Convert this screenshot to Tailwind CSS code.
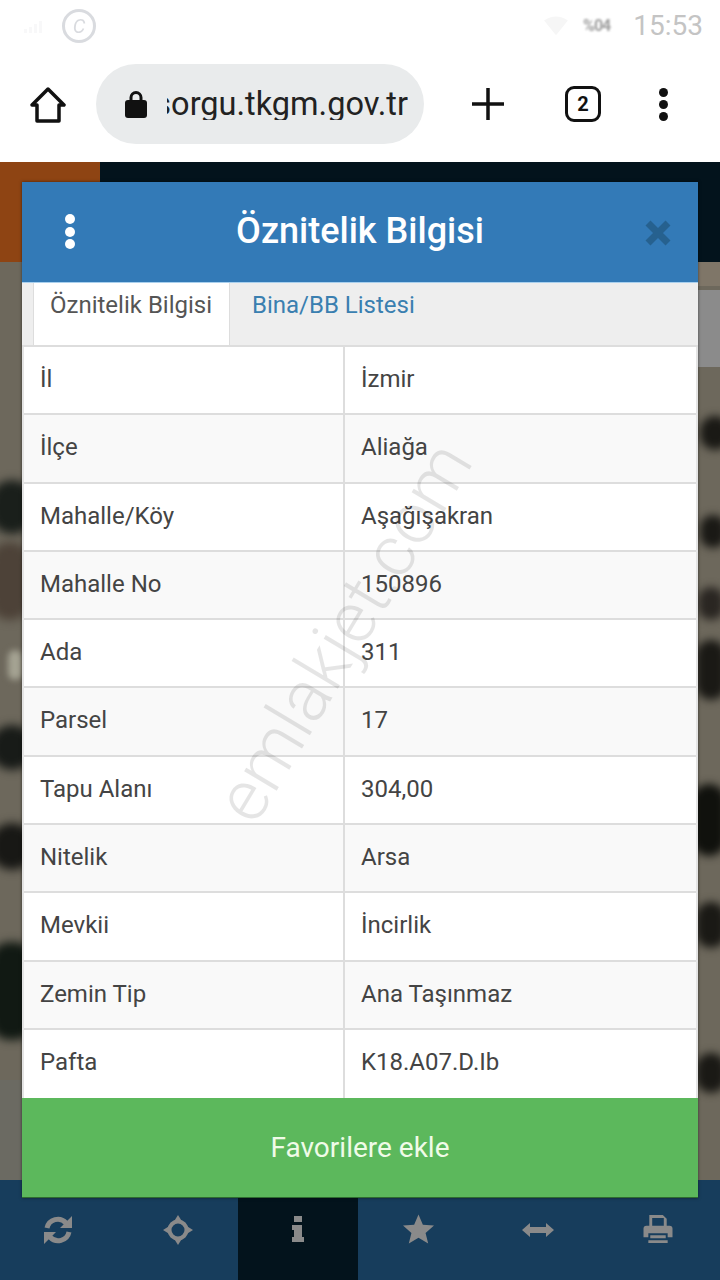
<!DOCTYPE html>
<html lang="en">
<head>
    <meta charset="UTF-8">
    <meta name="viewport" content="width=device-width, initial-scale=1.0">
    <title>Öznitelik Bilgisi</title>
    <script src="https://cdn.jsdelivr.net/npm/@tailwindcss/browser@4"></script>
</head>
<body class="w-[720px] h-[1280px] overflow-hidden bg-white font-['Roboto',sans-serif]">
    <!-- Status bar -->
    <div class="h-[50px] flex items-center justify-between pl-[24px] pr-[17px] pt-[1px]">
        <div class="flex items-center gap-[4px] opacity-25">
            <div class="w-[34px] h-[14px] flex items-end gap-[2px]">
                <span class="w-[3px] h-[4px] bg-gray-200"></span>
                <span class="w-[3px] h-[6px] bg-gray-200"></span>
                <span class="w-[3px] h-[9px] bg-gray-200"></span>
                <span class="w-[3px] h-[12px] bg-gray-200"></span>
            </div>
            <div class="w-[34px] h-[34px] rounded-full border-[3px] border-gray-500 flex items-center justify-center text-[20px] italic text-gray-500">C</div>
        </div>
        <div class="flex items-center">
            <svg class="w-[28px] h-[22px] mr-[13px]" viewBox="0 0 30 24"><path d="M2 6 Q15 -3 28 6 L15 22 Z" fill="#f6f6f6"/></svg>
            <span class="text-[16px] font-bold text-[#a0a0a0] tracking-[-1px] mr-[23px] blur-[1px]">%04</span>
            <span class="text-[28px] leading-none text-[#c4c4c4]">15:53</span>
        </div>
    </div>

    <!-- Browser toolbar -->
    <div class="h-[112px] relative">
        <svg class="absolute left-[30px] top-[37px] w-[36px] h-[36px]" viewBox="0 0 36 36" fill="none" stroke="#111" stroke-width="3.5" stroke-linejoin="round"><path d="M18 2 L34 18 H29 V34 H7 V18 H2 Z"/></svg>
        <div class="absolute left-[96px] top-[14px] w-[328px] h-[80px] rounded-[40px] bg-[#e9ebec] flex items-center pl-[29px] overflow-hidden">
            <svg class="w-[22px] h-[28px] shrink-0" viewBox="0 0 22 28"><path d="M6 12 V7.5 a5 5 0 0 1 10 0 V12" fill="none" stroke="#111" stroke-width="3"/><rect x="0" y="10" width="22" height="18" rx="3" fill="#111"/></svg>
            <div class="ml-[20px] w-[241px] overflow-hidden whitespace-nowrap flex justify-end text-[32.5px] leading-none text-[#222]">sorgu.tkgm.gov.tr</div>
        </div>
        <svg class="absolute left-[472px] top-[38px] w-[32px] h-[32px]" viewBox="0 0 32 32" stroke="#111" stroke-width="3.5"><path d="M0 16 H32 M16 0 V32"/></svg>
        <div class="absolute left-[565px] top-[36px] w-[36px] h-[36px] rounded-[9px] border-[3.5px] border-[#111] flex items-center justify-center text-[20px] font-bold text-[#111]">2</div>
        <div class="absolute left-[659px] top-[38px] flex flex-col gap-[3px]">
            <span class="w-[9px] h-[9px] rounded-full bg-[#111]"></span>
            <span class="w-[9px] h-[9px] rounded-full bg-[#111]"></span>
            <span class="w-[9px] h-[9px] rounded-full bg-[#111]"></span>
        </div>
    </div>

    <!-- Map page -->
    <div class="relative h-[1118px] bg-[#6d685c] overflow-hidden">
        <!-- top bar over the map -->
        <div class="h-[100px] flex bg-[#03131c]">
            <div class="w-[100px] bg-[#8e4413]"></div>
        </div>
        <!-- satellite blotches, left edge -->
        <div class="absolute left-[-10px] top-[318px] w-[44px] h-[54px] rounded-full bg-[#1a1f1b] blur-[5px]"></div>
        <div class="absolute left-[-10px] top-[380px] w-[40px] h-[78px] rounded-[20px] bg-[#4d4238] blur-[5px]"></div>
        <div class="absolute left-[8px] top-[488px] w-[14px] h-[30px] rounded-full bg-[#a5a393] blur-[3px]"></div>
        <div class="absolute left-[-10px] top-[563px] w-[44px] h-[45px] rounded-full bg-[#181b18] blur-[5px]"></div>
        <div class="absolute left-[-10px] top-[661px] w-[44px] h-[47px] rounded-full bg-[#181815] blur-[5px]"></div>
        <div class="absolute left-[-10px] top-[780px] w-[44px] h-[98px] rounded-[20px] bg-[#111913] blur-[5px]"></div>
        <div class="absolute left-0 top-[918px] w-[24px] h-[100px] bg-[#6b6a62]"></div>
        <!-- satellite blotches, right edge -->
        <div class="absolute right-0 top-[100px] w-[22px] h-[24px] bg-[#7f7668]"></div>
        <div class="absolute right-0 top-[128px] w-[22px] h-[77px] bg-[#8b8b8b]"></div>
        <div class="absolute right-[-10px] top-[254px] w-[30px] h-[34px] rounded-full bg-[#1a1915] blur-[4px]"></div>
        <div class="absolute right-[-6px] top-[353px] w-[26px] h-[33px] rounded-full bg-[#1a1915] blur-[4px]"></div>
        <div class="absolute right-[-4px] top-[425px] w-[26px] h-[33px] rounded-full bg-[#2a2622] blur-[4px]"></div>
        <div class="absolute right-[-6px] top-[478px] w-[30px] h-[60px] rounded-full bg-[#1a1915] blur-[4px]"></div>
        <div class="absolute right-[-6px] top-[622px] w-[34px] h-[72px] rounded-[20px] bg-[#10110d] blur-[4px]"></div>
        <div class="absolute right-[-6px] top-[740px] w-[30px] h-[46px] rounded-full bg-[#1a1915] blur-[4px]"></div>
        <div class="absolute right-[-6px] top-[891px] w-[30px] h-[40px] rounded-full bg-[#1a1915] blur-[4px]"></div>

        <!-- bottom nav -->
        <div class="absolute left-0 right-0 bottom-0 h-[100px] bg-[#173d5c]">
            <div class="ml-[-2px] w-[720px] h-full grid grid-cols-6">
                <div class="flex justify-center pt-[35px]">
                    <svg class="w-[28px] h-[30px]" viewBox="0 0 28 30" fill="none" stroke="#8a8a8a" stroke-width="5"><path d="M3 13 a11 11 0 0 1 19 -5 M25 17 a11 11 0 0 1 -19 5"/><path d="M28 1 V13 H16 Z M0 29 V17 H12 Z" fill="#8a8a8a" stroke="none"/></svg>
                </div>
                <div class="flex justify-center pt-[35px]">
                    <svg class="w-[30px] h-[30px]" viewBox="0 0 30 30" fill="none" stroke="#8a8a8a" stroke-width="4"><circle cx="15" cy="15" r="8.5"/><path d="M15 0 L10 8 H20 Z M15 30 L10 22 H20 Z M0 15 L8 10 V20 Z M30 15 L22 10 V20 Z" fill="#8a8a8a" stroke="none"/></svg>
                </div>
                <div class="flex justify-center pt-[36px] bg-[#03131c]">
                    <svg class="w-[14px] h-[26px]" viewBox="0 0 14 26" fill="#8a8a8a"><rect x="3" y="0" width="8" height="6"/><path d="M1 9 H11 V21 H13 V26 H1 V21 H3 V14 H1 Z"/></svg>
                </div>
                <div class="flex justify-center pt-[34px]">
                    <svg class="w-[31px] h-[30px]" viewBox="0 0 32 30" fill="#8a8a8a"><path d="M16 0 L20.5 10.5 L32 11.5 L23.3 19 L26 30 L16 24 L6 30 L8.7 19 L0 11.5 L11.5 10.5 Z"/></svg>
                </div>
                <div class="flex justify-center pt-[43px]">
                    <svg class="w-[32px] h-[14px]" viewBox="0 0 32 14" fill="#8a8a8a"><path d="M0 7 L8 0 V4 H24 V0 L32 7 L24 14 V10 H8 V14 Z"/></svg>
                </div>
                <div class="flex justify-center pt-[35px]">
                    <svg class="w-[30px] h-[29px]" viewBox="0 0 30 30" fill="#8a8a8a"><path d="M6 0 H20 L24 4 V12 H21 V3 H9 V12 H6 Z"/><path d="M3 11 H27 Q30 11 30 14 V23 H25 V19 H5 V23 H0 V14 Q0 11 3 11 Z"/><path d="M7 21 H23 V24 H7 Z M5 26 H25 V29 H5 Z"/></svg>
                </div>
            </div>
        </div>

        <!-- dialog -->
        <div class="absolute left-[22px] top-[20px] w-[676px] border-b-[1px] border-[#2f6b2f] shadow-[0_0_3px_rgba(0,0,0,0.5)]">
            <div class="relative h-[100px] bg-[#337ab7] flex items-center justify-center">
                <div class="absolute left-[43px] top-[32px] flex flex-col gap-[2.5px]">
                    <span class="w-[10px] h-[10px] rounded-full bg-white"></span>
                    <span class="w-[10px] h-[10px] rounded-full bg-white"></span>
                    <span class="w-[10px] h-[10px] rounded-full bg-white"></span>
                </div>
                <span class="text-[36px] font-medium text-white pb-[2px]">Öznitelik Bilgisi</span>
                <svg class="absolute left-[623px] top-[38px] w-[26px] h-[26px]" viewBox="0 0 26 26" stroke="#26618f" stroke-width="7"><path d="M3 3 L23 23 M23 3 L3 23"/></svg>
            </div>
            <div class="h-[65px] bg-[#eeeeee] border-t-[1px] border-b-[2px] border-t-[#a9d0ee] border-b-[#dddddd] flex pl-[11px] text-[24px]">
                <div class="w-[197px] h-[62px] bg-white border-x-[1px] border-[#dddddd] pl-[16px] pt-[4px] text-[#555555]">Öznitelik Bilgisi</div>
                <div class="pl-[22px] pt-[4px] text-[#3a7fb0]">Bina/BB Listesi</div>
            </div>
            <div class="bg-white border-x-[2px] border-[#e4e4e4] text-[24px] text-[#444444]">
                <div class="h-[68.3px] grid grid-cols-[321px_1fr] bg-white border-b-[2px] border-[#dddddd]"><div class="pl-[16px] pt-[14px] border-r-[2px] border-[#dddddd]">İl</div><div class="pl-[16px] pt-[14px]">İzmir</div></div>
                <div class="h-[68.3px] grid grid-cols-[321px_1fr] bg-[#f9f9f9] border-b-[2px] border-[#dddddd]"><div class="pl-[16px] pt-[14px] border-r-[2px] border-[#dddddd]">İlçe</div><div class="pl-[16px] pt-[14px]">Aliağa</div></div>
                <div class="h-[68.3px] grid grid-cols-[321px_1fr] bg-white border-b-[2px] border-[#dddddd]"><div class="pl-[16px] pt-[14px] border-r-[2px] border-[#dddddd]">Mahalle/Köy</div><div class="pl-[16px] pt-[14px]">Aşağışakran</div></div>
                <div class="h-[68.3px] grid grid-cols-[321px_1fr] bg-[#f9f9f9] border-b-[2px] border-[#dddddd]"><div class="pl-[16px] pt-[14px] border-r-[2px] border-[#dddddd]">Mahalle No</div><div class="pl-[16px] pt-[14px]">150896</div></div>
                <div class="h-[68.3px] grid grid-cols-[321px_1fr] bg-white border-b-[2px] border-[#dddddd]"><div class="pl-[16px] pt-[14px] border-r-[2px] border-[#dddddd]">Ada</div><div class="pl-[16px] pt-[14px]">311</div></div>
                <div class="h-[68.3px] grid grid-cols-[321px_1fr] bg-[#f9f9f9] border-b-[2px] border-[#dddddd]"><div class="pl-[16px] pt-[14px] border-r-[2px] border-[#dddddd]">Parsel</div><div class="pl-[16px] pt-[14px]">17</div></div>
                <div class="h-[68.3px] grid grid-cols-[321px_1fr] bg-white border-b-[2px] border-[#dddddd]"><div class="pl-[16px] pt-[14px] border-r-[2px] border-[#dddddd]">Tapu Alanı</div><div class="pl-[16px] pt-[14px]">304,00</div></div>
                <div class="h-[68.3px] grid grid-cols-[321px_1fr] bg-[#f9f9f9] border-b-[2px] border-[#dddddd]"><div class="pl-[16px] pt-[14px] border-r-[2px] border-[#dddddd]">Nitelik</div><div class="pl-[16px] pt-[14px]">Arsa</div></div>
                <div class="h-[68.3px] grid grid-cols-[321px_1fr] bg-white border-b-[2px] border-[#dddddd]"><div class="pl-[16px] pt-[14px] border-r-[2px] border-[#dddddd]">Mevkii</div><div class="pl-[16px] pt-[14px]">İncirlik</div></div>
                <div class="h-[68.3px] grid grid-cols-[321px_1fr] bg-[#f9f9f9] border-b-[2px] border-[#dddddd]"><div class="pl-[16px] pt-[14px] border-r-[2px] border-[#dddddd]">Zemin Tip</div><div class="pl-[16px] pt-[14px]">Ana Taşınmaz</div></div>
                <div class="h-[68.3px] grid grid-cols-[321px_1fr] bg-white"><div class="pl-[16px] pt-[14px] border-r-[2px] border-[#dddddd]">Pafta</div><div class="pl-[16px] pt-[14px]">K18.A07.D.Ib</div></div>
            </div>
            <div class="h-[99px] bg-[#5cb85c] flex items-center justify-center text-[28px] text-[#f0fbe8]">Favorilere ekle</div>
        </div>
        <!-- watermark -->
        <div class="absolute left-[114px] top-[434px] -rotate-[59deg] w-[460px] text-center text-[72px] leading-none font-light text-black/10 pointer-events-none">emlakjet.com</div>
    </div>
</body>
</html>
